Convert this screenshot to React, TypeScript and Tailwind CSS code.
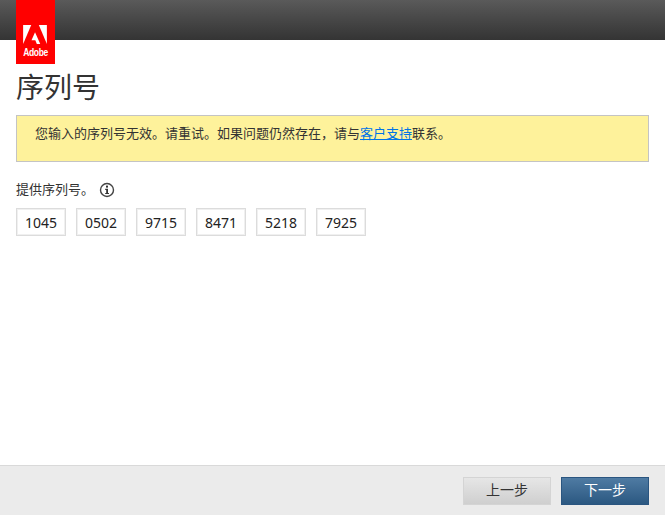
const cjk = "font-['Liberation_Sans','Noto_Sans_CJK_SC',sans-serif]";

const serial = ['1045', '0502', '9715', '8471', '5218', '7925'];

function AdobeLogo() {
  return (
    <div className="absolute left-4 top-0 flex h-16 w-[39px] flex-col items-center justify-end bg-[#ff0000] pb-[6px]">
      <svg width="25" height="19" viewBox="0 0 26 20" fill="#fff">
        <path d="M0 0H8.5L0 20Z" />
        <path d="M16.5 0H25V20Z" />
        <path d="M12.5 7.5L18 20H14.4L12.8 16H8.8Z" />
      </svg>
      <span className="mt-1 scale-x-[0.85] text-[10px] leading-[10px] font-bold tracking-[-0.4px] text-white font-['Liberation_Sans',sans-serif]">
        Adobe
      </span>
    </div>
  );
}

function InfoIcon() {
  return (
    <svg width="16" height="16" viewBox="0 0 16 16" fill="none">
      <circle cx="8" cy="8" r="6.5" stroke="#444" strokeWidth="1.4" />
      <rect x="7" y="3.6" width="2" height="2" fill="#333" />
      <path d="M6.2 6.8H9V11H10V12H6.2V11H7.2V7.9H6.2Z" fill="#333" />
    </svg>
  );
}

export default function App() {
  return (
    <div className={`relative flex h-[515px] w-[665px] flex-col overflow-hidden bg-white ${cjk}`}>
      <header className="h-10 shrink-0 bg-gradient-to-b from-[#5a5a5a] to-[#343434]" />
      <AdobeLogo />

      <main className="flex-1 px-4">
        <h1 className="mt-[30px] text-[28px] leading-[38px] text-[#333]">序列号</h1>

        <div className="mt-[7px] h-[47px] w-[633px] border border-[#c4c4c4] bg-[#fef29b] pt-[9px] pl-[18px] text-[13px] leading-[18px] text-[#333]">
          您输入的序列号无效。请重试。如果问题仍然存在，请与
          <a className="text-[#0073e6] underline">客户支持</a>
          联系。
        </div>

        <div className="mt-5 flex h-4 items-center text-[13px] text-[#333]">
          <span>提供序列号。</span>
          <span className="ml-[5px]">
            <InfoIcon />
          </span>
        </div>

        <div className="mt-[10px] flex gap-[10px]">
          {serial.map((group) => (
            <div
              key={group}
              className="flex h-7 w-[50px] items-center justify-center border border-[#dcdcdc] bg-white text-[14px] text-[#222] shadow-[inset_0_0_0_1px_#f0f0f0] font-['Noto_Sans',sans-serif]"
            >
              {group}
            </div>
          ))}
        </div>
      </main>

      <footer className="flex h-[50px] shrink-0 items-center justify-end gap-[10px] border-t border-[#d9d9d9] bg-[#ebebeb] pr-4">
        <button className="h-7 w-[88px] border border-[#d4d4d4] bg-gradient-to-b from-[#e6e6e6] to-[#cfcfcf] text-[14px] text-[#333]">
          上一步
        </button>
        <button className="h-7 w-[88px] border border-[#2a5580] bg-gradient-to-b from-[#4f7ba3] to-[#2b5881] text-[14px] text-white">
          下一步
        </button>
      </footer>
    </div>
  );
}
